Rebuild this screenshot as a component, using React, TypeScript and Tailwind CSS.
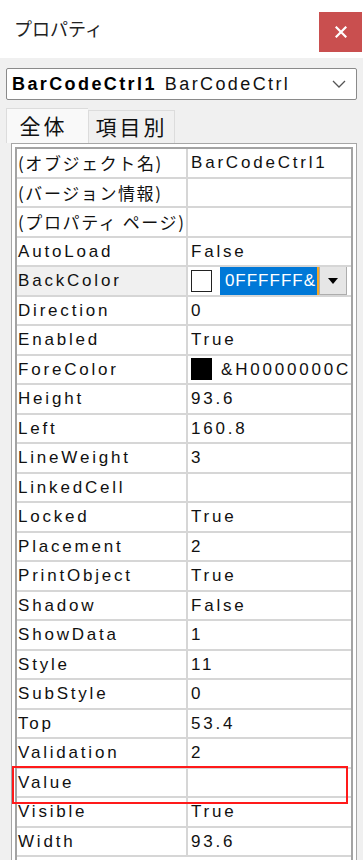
import React from "react";

type Row = { name: string; value?: string; kind?: "back" | "fore"; cjk?: boolean };

const rows: Row[] = [
  { name: "(オブジェクト名)", value: "BarCodeCtrl1", cjk: true },
  { name: "(バージョン情報)", value: "", cjk: true },
  { name: "(プロパティ ページ)", value: "", cjk: true },
  { name: "AutoLoad", value: "False" },
  { name: "BackColor", kind: "back" },
  { name: "Direction", value: "0" },
  { name: "Enabled", value: "True" },
  { name: "ForeColor", kind: "fore" },
  { name: "Height", value: "93.6" },
  { name: "Left", value: "160.8" },
  { name: "LineWeight", value: "3" },
  { name: "LinkedCell", value: "" },
  { name: "Locked", value: "True" },
  { name: "Placement", value: "2" },
  { name: "PrintObject", value: "True" },
  { name: "Shadow", value: "False" },
  { name: "ShowData", value: "1" },
  { name: "Style", value: "11" },
  { name: "SubStyle", value: "0" },
  { name: "Top", value: "53.4" },
  { name: "Validation", value: "2" },
  { name: "Value", value: "" },
  { name: "Visible", value: "True" },
  { name: "Width", value: "93.6" },
];

const latin = "font-['Liberation_Sans','Noto_Sans_CJK_JP',sans-serif] text-[17px] tracking-[2.8px]";
const cjk = "font-['Noto_Sans_CJK_JP',sans-serif] text-[17px] tracking-[1.6px]";

export default function App() {
  return (
    <div className="w-[363px] h-[860px] overflow-hidden bg-[#f0f0f0] flex flex-col text-[#111]">
      {/* title bar */}
      <div className="h-[58px] bg-white flex items-start justify-between shrink-0">
        <div className="pl-[14px] pt-[15px] text-[18px] text-[#222] font-['Noto_Sans_CJK_JP',sans-serif] leading-[26px]">
          プロパティ
        </div>
        <div className="mt-[12px] mr-[1px] w-[43px] h-[40px] bg-[#c94f4f] flex items-center justify-center">
          <svg width="12" height="12" viewBox="0 0 12 12">
            <path d="M1.5 1.5 L10.5 10.5 M10.5 1.5 L1.5 10.5" stroke="white" strokeWidth="2.2" strokeLinecap="square" />
          </svg>
        </div>
      </div>

      {/* object dropdown */}
      <div className="mt-[10px] mx-[6px] h-[32px] bg-white border border-[#8a8a8a] rounded-[2px] flex items-center pl-[5px] pr-[10px] shrink-0 overflow-hidden whitespace-nowrap">
        <span className="font-['Liberation_Sans',sans-serif] text-[18px] font-bold tracking-[2.4px] text-black">BarCodeCtrl1</span>
        <span className="ml-[8px] font-['Liberation_Sans',sans-serif] text-[18px] tracking-[2.4px] text-[#111]">BarCodeCtrl</span>
        <div className="flex-1" />
        <svg width="14" height="8" viewBox="0 0 14 8" className="shrink-0">
          <path d="M1 1 L7 7 L13 1" fill="none" stroke="#555" strokeWidth="1.3" />
        </svg>
      </div>

      {/* tabs */}
      <div className="mt-[8px] ml-[6px] flex items-end h-[35px] shrink-0">
        <div className="w-[82px] h-[35px] bg-[#f9f9f9] border-t border-l border-[#dcdcdc] flex items-center justify-center pr-[8px] font-['Noto_Sans_CJK_JP',sans-serif] text-[21px] tracking-[3px] text-[#111]">
          全体
        </div>
        <div className="w-[87px] h-[33px] bg-[#f0f0f0] border-t border-r border-l border-[#dcdcdc] flex items-center justify-center font-['Noto_Sans_CJK_JP',sans-serif] text-[21px] tracking-[3px] text-[#111]">
          項目別
        </div>
      </div>

      {/* grid */}
      <div className="ml-[11px] mr-[6px] flex-1 bg-white border border-[#a6a6a6] p-[3px] pb-0 border-b-0">
        <div className="border-2 border-b-0 border-[#a3a3a3] h-full bg-white">
          {rows.map((r) => {
            const isValue = r.name === "Value";
            return (
              <div
                key={r.name}
                className={`relative flex h-[29.5px] border-b-2 border-[#d6d6d6] ${r.kind === "back" ? "bg-[#f0f0f0]" : "bg-white"}`}
              >
                <div
                  className={`w-[171px] shrink-0 border-r-2 border-[#d6d6d6] pl-[1px] flex items-center overflow-hidden whitespace-nowrap leading-none ${r.cjk ? cjk : latin}`}
                >
                  {r.name}
                </div>
                <div className={`flex-1 flex items-center pl-[3px] overflow-hidden whitespace-nowrap leading-none bg-white ${latin}`}>
                  {r.kind === "back" ? (
                    <div className="flex items-center h-full w-full">
                      <div className="w-[21px] h-[22px] border border-[#222] bg-white shrink-0" />
                      <div className="ml-[8px] h-[28px] w-[99px] bg-[#0078d7] text-white flex items-center justify-end pr-[1px] border-r-2 border-[#f5a623] shrink-0 tracking-[1px]">
                        0FFFFFF&amp;
                      </div>
                      <div className="h-[29px] w-[28px] bg-[#e6e6e6] border border-[#adadad] flex items-center justify-center shrink-0">
                        <svg width="10" height="6" viewBox="0 0 10 6">
                          <path d="M0 0 L10 0 L5 6 Z" fill="#000" />
                        </svg>
                      </div>
                    </div>
                  ) : r.kind === "fore" ? (
                    <div className="flex items-center h-full">
                      <div className="w-[21px] h-[22px] bg-black shrink-0" />
                      <span className="ml-[9px]">&amp;H0000000C</span>
                    </div>
                  ) : (
                    r.value
                  )}
                </div>
                {isValue && (
                  <div className="absolute z-10 left-[-5px] top-[-3px] w-[336px] h-[38px] border-2 border-[#ff1a1a] pointer-events-none" />
                )}
              </div>
            );
          })}
        </div>
      </div>
    </div>
  );
}
